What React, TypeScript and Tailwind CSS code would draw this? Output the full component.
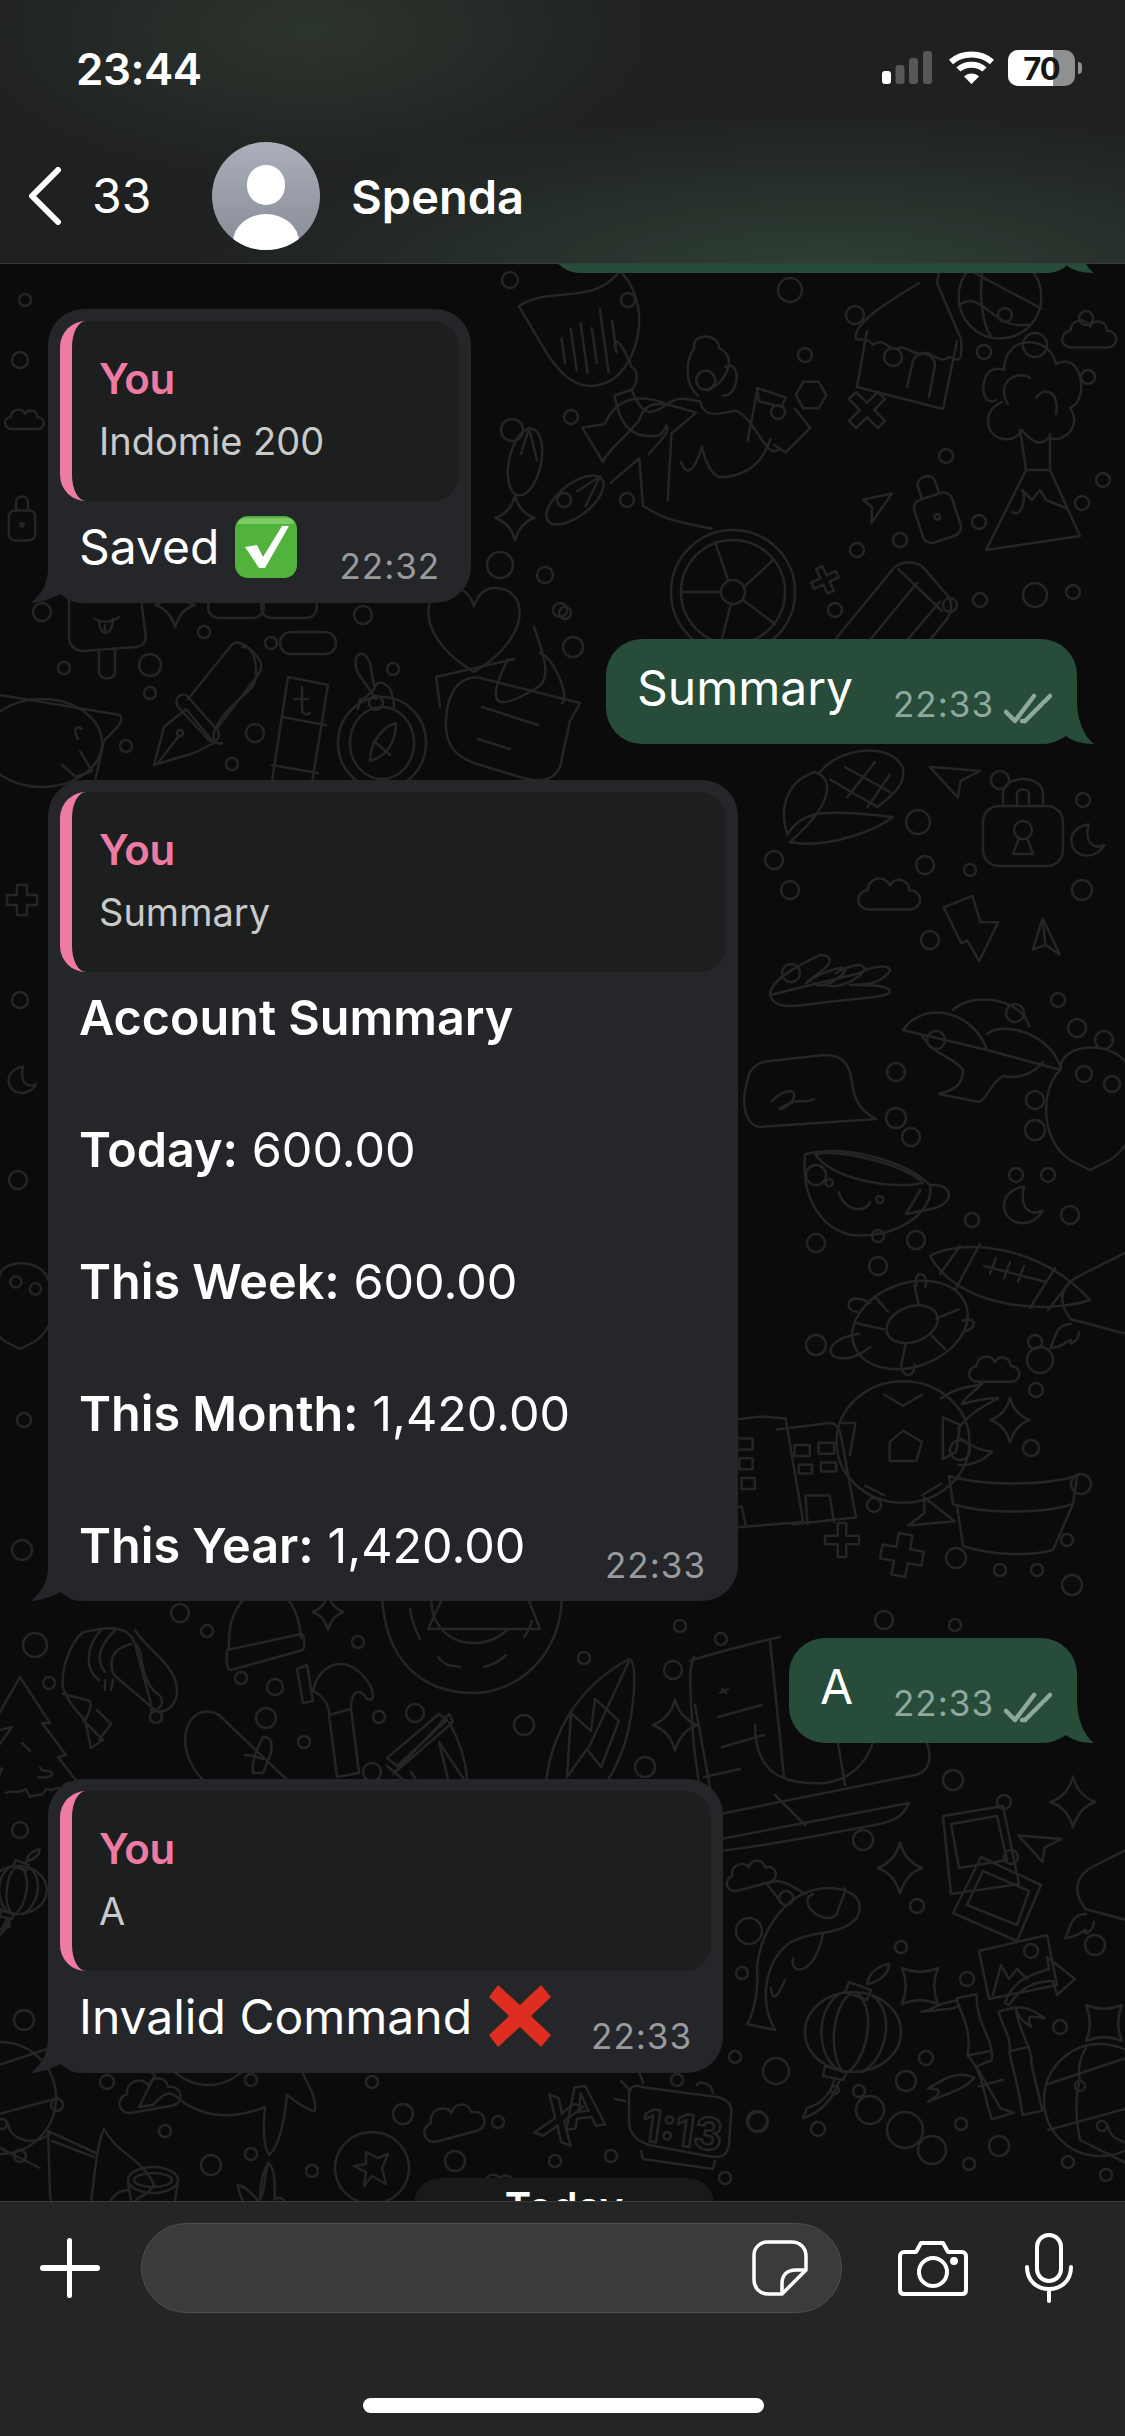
import type { ReactNode } from "react";

const shapes: Record<string, ReactNode> = {
  star: <path d="M0-32Q6-8 28 0 8 6 0 32-6 8-28 0-6-8 0-32Z" />,
  square: <path d="M-24-24Q0-14 24-24 14 0 24 24 0 14-24 24-14 0-24-24Z" />,
  plane: <path d="M-36-16 36-10 8 4 4 28Z M-36-16 8 4" />,
  plane2: <path d="M-36-16 36-10 8 4 4 28Z" />,
  cloud: <path d="M-26 18C-44 18-44-4-28-6-28-22-6-26 0-12 6-24 24-20 24-6 42-6 42 18 24 18Z" />,
  moon: <path d="M6-26C-34-22-30 26 4 26 16 26 28 18 32 8 16 16-2 6 6-26Z" />,
  heart: <path d="M0 30C-40 6-36-26-14-26-6-26-2-20 0-14 2-20 6-26 14-26 36-26 40 6 0 30Z" />,
  cross: <path d="M-10-30H10V-10H30V10H10V30H-10V10H-30V-10H-10Z" />,
  x: <path d="M-30-18-18-30 0-12 18-30 30-18 12 0 30 18 18 30 0 12-18 30-30 18-12 0Z" />,
  hex: <path d="M-28 0-14-24H14L28 0 14 24H-14Z" />,
  bolt: <path d="M-30-34 8-42 12-8 34-4 2 40-8 12-16 14Z" />,
  pill: <rect x="-28" y="-11" width="56" height="22" rx="11" />,
  lock: (
    <g>
      <rect x="-40" y="-24" width="80" height="60" rx="16" />
      <path d="M-20-24V-36C-20-56 20-56 20-36V-24M-20-24H-6V-36C-6-42 6-42 6-36V-24H20" />
      <circle cx="0" cy="0" r="9" />
      <path d="M-4 8-10 24H10L4 8" />
    </g>
  ),
  padlock: (
    <g>
      <rect x="-22" y="-16" width="44" height="50" rx="10" />
      <path d="M-10-16V-30C-10-42 10-42 10-30V-16" />
      <circle cx="0" cy="8" r="3" />
    </g>
  ),
  pot: (
    <g>
      <path d="M-64-34C-30-24 30-24 64-34L60-6C30 4-30 4-60-6Z" />
      <path d="M-56-4-50 36C-20 46 20 46 40 40L60-6" />
    </g>
  ),
  football: (
    <g>
      <path d="M-80-24C-50-42 30-36 80 20 40 34-50 30-80-24Z" />
      <path d="M-50-34-70-6M-30-36-55 10M45-12 20 28M60 2 38 30M-26-14 36 2M-14-22-20-6M0-18-6-2M14-14 8 2" />
    </g>
  ),
  soccer: (
    <g>
      <ellipse cx="0" cy="0" rx="70" ry="64" />
      <path d="M-20-50 0-38 20-50M-14 0 0-12 20 0 14 20-14 20Z M42-26 60-18 56 10 42 18ZM-64-20-50-20-56 14M-40 46-20 56M20 56 40 44" />
      <path d="M40-46C60-60 70-56 84-62 72-50 66-48 62-40 76-44 88-46 100-46 80-36 66-26 58-14M58 24C70 26 84 20 94 10 80 10 70 2 60-4" />
    </g>
  ),
  turtle: (
    <g>
      <ellipse cx="0" cy="0" rx="54" ry="38" transform="rotate(-20)" />
      <ellipse cx="2" cy="0" rx="24" ry="16" transform="rotate(-20)" />
      <path d="M-20-12-32-26M8-18 4-36M24-6 44-14M20 10 32 22M-4 18-8 36M-24 4-50-2" />
      <path d="M-46 8C-70 12-76 22-70 28-60 34-46 28-36 20M-48-12C-56-12-60-22-50-24-44-24-40-22-36-20M6-36C2-50 18-50 14-34M48-4C60-8 62 2 50 6M-8 38C-6 50 6 46 4 36" />
    </g>
  ),
  cup: (
    <g>
      <path d="M-54-30C-20-38 30-24 50-4 54 14 30 38-10 38-40 36-58 6-54-30Z" />
      <path d="M-46-30C-20-34 30-20 44-6 20 0-30-8-46-30Z" />
      <path d="M50-4C70-6 72 12 50 16L30 20 42 0" />
      <circle cx="-34" cy="-6" r="3" />
      <circle cx="8" cy="8" r="3" />
      <path d="M-26 2C-20 20-2 18 0 10" />
    </g>
  ),
  helmet: (
    <g>
      <path d="M-80-20C-60-50-10-40 4 0ZM4 0-80-20M4-16C20-30 70-16 78 20L4 0M-30-40C-10-60 40-50 46-24" />
      <path d="M-62-16C-50 6-30 6-20 20-20 36-30 40-44 44L-4 52C6 48 6 34 20 26 40 30 54 20 60 12" />
    </g>
  ),
  corn: (
    <g>
      <path d="M-42 14C-50-10-40-30-20-36-4-30-6-10-40 20-10 26 30 10 42 0-10-6-30-6-42 14Z" />
      <path d="M-16-36C0-56 40-60 50-40 54-26 40-16 30-8M-8-30 30-8M4-40 40-20M6-16 28-44M22-8 40-34" />
    </g>
  ),
  house: (
    <g>
      <path d="M-50-6-60 50 26 72 40 4" />
      <path d="M-60-6C-66 10-52-4-44 8-34 0-30 12-20 12-12 6-4 20 6 16 14 14 24 28 32 20 40 22 46 30 44 2L20-54 24-76C12-66 8-70 10-84M-60-6C-50-24-20-40 2-54" />
      <circle cx="-24" cy="20" r="9" />
      <path d="M-10 50-4 24C0 12 18 16 18 28L12 60" />
    </g>
  ),
  tree: (
    <g>
      <path d="M-34-30C-52-20-52-70-26-60-26-96 20-96 26-66 52-80 60-30 40-22 52-6 36 14 18 8 10 18 0 10-8 0-16 16-42 10-42-8-42-20-36-24-28-28" />
      <path d="M-22-26C-36-50-10-60 0-52M-10 0-4 40H20L20 4M-4 40-44 120 50 106 20 40M-18 82C-6 90-4 60-8 60L2 70 10 60 16 70 36 78" />
      <path d="M6-32C16-46 30-36 26-16" />
    </g>
  ),
  wheel: (
    <g>
      <ellipse cx="0" cy="0" rx="62" ry="62" />
      <ellipse cx="0" cy="0" rx="52" ry="52" />
      <circle cx="0" cy="0" r="12" />
      <path d="M-5-12-18-50M12-6 40-32M10 8 42 32M-2 12-12 50M-12 0H-50" />
    </g>
  ),
  rider: (
    <g>
      <path d="M-100-80C-88-110-60-112-32-100-54-104-60-96-64-84-80-64-98-52-102-40L-124-76-100-80M-32-100-4-92-30-70-34 0M-94-18-64-44-60 6C-40 20-20 24 12 30" />
      <path d="M-90-162C-90-170-84-170-72-140-64-136-66-122-72-116L-90-110C-84-76-70-64-44-68-36-70-36-86-34-74-36-66-50-54-54-48M-72-116C-60-86-50-90-36-100-20-112-10-104 0-104 4-84 22-92 38-94 60-84 70-40 84-54" />
      <circle cx="6" cy="-126" r="10" />
      <path d="M-2-110C-18-122-14-150-6-160-10-176 20-176 20-160 40-150 28-126 10-116M26-140C44-150 42-108 24-110" />
      <path d="M60-118 90-108 86-98 62-104ZM60-114 50-62M100-96 116-76 90-50 78-58M74-64C64-32 40-24 20-24 8-30 4-48 2-56-6-30-14-24-20-40" />
    </g>
  ),
  mic: (
    <g>
      <path d="M-60-60C-30-76 10-50 40-80 70-40 40 20 10 24-30 32-40-16-60-60Z" />
      <path d="M-24-24V0M-14-32V8M-4-36V12M6-30V4M16-46V14M26-34V-4" />
    </g>
  ),
  pencil: (
    <g>
      <path d="M-60 70-64 24 10-66C20-74 36-72 42-64L66-36C72-28 70-18 64-10L-8 78Z" />
      <path d="M-40 40 34-50M-12 52 58-30M14-64 60-20M-60 30C-50 30-52 44-42 42-30 40-32 56-22 60" />
    </g>
  ),
  speech: (
    <g>
      <path d="M-52-26C-52-36-40-44-30-44L24-50C40-50 50-44 52-22 54-6 60 6 76 14L-40 22C-50 22-62 6-52-26Z" />
      <path d="M-28-4C-14-18 0-16-8-4-16 6-28 6-14 0 0-8 2 0 14-6" />
    </g>
  ),
  hand: (
    <path d="M-70 10C-70-6-40-20-20-30-10-30-6-24-16-16L-34-2M-34-2C-20-12 10-24 4-12-6-2-20 4-26-2M-4-12C10-20 26-24 24-14 14-2-6 4-14 0M20-12C30-18 50-22 50-14 40-2 30 0 10 0 30 0 48 0 50 6 50 12 30 12-20 18-50 22-66 24-70 10Z" />
  ),
  fish: (
    <g>
      <path d="M-70 66-42 72C-60 40-50 0-26-16 0-30 20-20 40-40 50-62 30-70 10-70-30-68-56-30-60 10-58 40-66 60-70 66Z" />
      <path d="M-12-64C-30-76-40-80-50-74L-36-56M-4-64C-22-56 8-30 20-44 22-54 30-66 28-70M-24 0C-26 10-20 14-12 10 0 2 4-14 6-24M-46 30C-44 50-36 30-32 22" />
    </g>
  ),
  lantern: (
    <g>
      <ellipse cx="0" cy="0" rx="48" ry="40" />
      <path d="M0-40C-20-30-26 20-10 40M4-40C24-20 14 24-4 40M-14-38C-40-20-36 30-10 40M20-36C44-18 32 30 8 40" />
      <path d="M-4-50 18-42 14-32-8-40ZM14-48C16-60 26-66 36-68 36-58 26-50 14-48M-28 34-6 40-10 48-30 44ZM-18 46C-22 60-30 72-46 76L-50 86C-30 80-20 66-14 50" />
      <circle cx="-18" cy="58" r="4" />
    </g>
  ),
  photo: (
    <g>
      <path d="M-34-36 26-46 42 32-26 42Z" />
      <path d="M-26-28 20-36 30 8-18 16Z" />
    </g>
  ),
  photo2: (
    <g>
      <path d="M-16-48 44-20 20 36-44 8Z" />
      <path d="M-14-34 32-14 20 20-30 0Z" />
    </g>
  ),
  picture: (
    <g>
      <path d="M-34-14 34-30 44 20-24 34Z" />
      <circle cx="18" cy="-14" r="7" />
      <path d="M-20 30-12 0-4 14 4 4 14 14" />
      <path d="M-8 38C0 14 18 10 36 4L34-8 62 14 44 30 40 16C20 16 6 24-4 40Z" />
    </g>
  ),
  bamboo: (
    <g>
      <path d="M-24-56-6-60C-6-30 10-20 8 0L-6 6 16 44 28 48 8 54C0 30 0 10-14-4-10-30-20-40-24-56ZM-14-4 6-8M-4 24 18 18M-24-54C-40-52-50-44-56-44-36-46-24-46-22-50M-8 16C-24 8-40 20-50 26-40 26-34 28-50 38-30 30-16 26-8 16" />
      <path d="M14-44 30-48C30-30 46-10 44 4L54 46 36 50C32 20 26 6 24-8 26-20 18-30 14-44ZM24-8 42-12M30-48C44-48 50-42 56-38 44-40 38-42 44-30 34-36 30-42 30-48" />
    </g>
  ),
  globe: (
    <g>
      <circle cx="0" cy="0" r="56" />
      <path d="M-52-16 50-50M-52 30 58 0M-20 40 40 70M-20-20C-26 0-24 20-20 40M8 26C10 40 30 50 50 36M-14-52C-22-40-22-26-20-20" />
      <circle cx="-20" cy="-14" r="5" />
      <circle cx="2" cy="26" r="5" />
    </g>
  ),
  laptop: (
    <g>
      <path d="M-120-80-100 30 100-10C110-12 116-20 114-34L100-90M-126 60C-110 70-100 70 60 40 90 34 90 24 94 18L-126 60ZM-40 10-10 40" />
      <path d="M-60-60C-60-10-30 0 10-2 40-6 60-30 60-60M20-60 30 0" />
    </g>
  ),
  building: (
    <g>
      <path d="M-60-52-26-56-4-54 12 40-62 46ZM-12-44 36-50C42-50 44-46 46-40L60 36 2 42" />
      <path d="M-48-36H-34V-26H-48ZM-46-18H-34V-8H-46ZM-44 0H-32V10H-44ZM4-30H18V-20H4ZM26-32H40V-22H26ZM8-12H20V-4H8ZM28-14H42V-6H28ZM16 42 14 16H36L40 40M-58 28-44 26-40 44" />
    </g>
  ),
  paw: (
    <g>
      <path d="M-20 60C-50 40-50-10-30-30-30-60 30-60 40-30 60-10 50 40 20 60L0 70Z" />
      <circle cx="-6" cy="-26" r="8" />
      <circle cx="22" cy="-16" r="8" />
    </g>
  ),
  basket: (
    <g>
      <circle cx="0" cy="0" r="36" />
      <path d="M-28-24 36 10M-34 6C-16-6-4 30 24 24M-14-32C-20 0-14 26-8 34" />
    </g>
  ),
  sandal: (
    <g>
      <ellipse cx="0" cy="0" rx="16" ry="34" transform="rotate(12)" />
      <path d="M4-34-4-8M4-34 12-2" />
    </g>
  ),
  rocket: (
    <g>
      <path d="M-30 24C-50 0-40-20-20-30L60-70 70 50 30 40Z" />
      <path d="M-30 30C-50 30-50 50-56 60-40 60-34 50-30 50-34 60-20 50-20 40" />
    </g>
  ),
  popsicle: (
    <g>
      <path d="M-38-30V10C-38 18-32 24-24 24L30 20C38 18 40 12 38 4L34-30" />
      <path d="M-8 24V44C-8 54 8 54 8 44V22M-12-8C-4-4 4-4 12-10M-8-6C-8 10 6 10 6-8M-2-2V4" />
    </g>
  ),
  nib: (
    <g>
      <path d="M-48 62-38 24-16 6 12 40-8 50ZM-44 60-24 34" />
      <circle cx="-22" cy="30" r="3" />
      <path d="M-24 4C-30-6-18-12-14-6L16 28C20 38 8 42 4 34ZM-14-4 28-56C34-64 40-60 48-54 60-44 62-36 56-28L16 24" />
      <path d="M40-56C52-58 54-40 54-30 56-10 30-6 14 24 8 36 14 42 20 40" />
    </g>
  ),
  ruler: (
    <g>
      <path d="M-8-50 32-42 12 80-28 80ZM-14-10 30-2M-24 38 22 46" />
      <path d="M6-40V-18C6-12 12-12 14-14M-2-28H12" />
    </g>
  ),
  compass: (
    <g>
      <ellipse cx="0" cy="10" rx="44" ry="46" />
      <ellipse cx="0" cy="10" rx="32" ry="36" />
      <path d="M14-10C0-6-12 10-12 28 4 24 14 10 14-10ZM-8 8 8 22" />
      <path d="M-24-24C-24-36-10-36-6-48-2-54 8-48 10-38 12-32 12-30 12-26M-24-24-22-34" />
      <circle cx="-6" cy="-30" r="7" />
      <path d="M-6-34-24-60C-32-80-18-86-12-70L-8-48" />
    </g>
  ),
  jar: (
    <g>
      <path d="M-68 2C-66-30-50-44-30-38L66-14 56 4 46 50C40 64 24 66 6 60L-40 46C-56 40-70 30-68 2Z" />
      <path d="M-32-10 24 8M-36 22-4 32" />
      <path d="M-74-10-78-40 0-58M-6-58C-30-10-18-4 24-30 40-40 26-72 20-90M26-64C40-60 56-20 48-14" />
    </g>
  ),
  smile: (
    <g>
      <ellipse cx="-18" cy="10" rx="60" ry="44" />
      <path d="M22-4C14-10 14 0 18 6M20 18 32 38 16 44 2 32" />
      <path d="M-60-38 60-18C66-10 50 0 44 8L30 70" />
    </g>
  ),
  shrimp: (
    <g>
      <path d="M48 12C30-8 38-30 28-36 20-60-8-50-24-48-40-34-46-6-44 8-40 20-32 30-22 40L-16 68-4 60 -24 40M-22 40C-16 30-14 20-20 20L-44 14M-6-50C-24-30-20-8-8 0M8-50C-8-34-12-20-2-8M24-36C-2-30 4-8 8-4L48 30" />
      <path d="M28-36 44 24M48 12C62 20 52 32 44 30 60 36 70 24 70 10 70-14 40-30 28-50" />
      <path d="M-8 60 4 44-10 30M-2 0-2 10M6 0 4 10" />
    </g>
  ),
  beanie: (
    <g>
      <path d="M-36-2C-38-36-24-60 0-62 24-62 34-40 36-14" />
      <path d="M-38-2 36-18C40-18 40-6 38-2L-34 18C-40 18-38 2-38-2Z" />
      <path d="M-8-62C-8-52 8-52 6-62" />
    </g>
  ),
  hammer: (
    <path d="M-40-38-30-42-24-6-34-4ZM-24-16C-18-46 14-56 34-20 38-10 36-6 30-8 22-20 14-16 14 2L22 66 0 70-8 8C-8-6-16-12-24-16ZM-8 8 14 2" />
  ),
  record: (
    <g>
      <path d="M-92-50C-90 20-50 50 0 50 40 50 88 16 88-50" />
      <path d="M-42-50C-46-20-26 0 0 0 20 0 30-10 34-14" />
      <path d="M-64-34C-62-20-58-12-54-4M-36 14C-28 24-24 22-14 24M10 24C18 22 26 18 32 12M58-22C56-16 54-10 50-6" />
      <path d="M-10-90-46-14H66L36-90" />
    </g>
  ),
  surf: (
    <g>
      <path d="M-52 70C-50 10-20-40 32-68 40-66 38-30 32 0 26 30 14 50-6 80M32-66-8 20" />
      <path d="M-26-14-6 4-2-28 22-6 4 40-10 22-30 50Z" />
    </g>
  ),
  drum: (
    <path d="M-52 8 0-36 8-30-42 16ZM-52 16-14 48M10-36 14-28-46 24ZM10-28C26 0 30 26 28 50M-28 22-10 50M0-8 14 50M0-8 28 34" />
  ),
  skate: (
    <g>
      <path d="M-58 0C-66-30-46-50-26-38L60 44H-10C-40 34-52 20-58 0Z" />
      <path d="M8 20C6 6 14-8 18-16 30-16 26-4 26 0L18 20ZM0 2C6 2 12 4 18 6" />
    </g>
  ),
  pine: (
    <g>
      <path d="M-16-56-48 0-24-6-50 30-34 36-50 70M-16-56 14-10H6L30 22 22 24 42 50C36 52 30 46 26 56 20 52 18 60 10 56 6 66 0 60-6 64L-10 56C-18 62-24 56-30 60" />
      <path d="M-14 10-6 18M4 34C6 42 16 34 16 42 12 46 4 44 2 44" />
    </g>
  ),
  phone: (
    <g>
      <path d="M-46-60C-50-50-52-46-46 30L-38 90M-50-56C-40-60 20-76 40-80M30-76 44 60" />
      <path d="M-18-28-14-24M-20-24-12-28M-22 0 22-12M-18 30 24 18" />
      <path d="M-36 60 0 52" />
    </g>
  ),
  whale: (
    <g>
      <path d="M-114-38-100-30-116 2-102 0C-90-14-84-14-76-6-50 14-20 14 10 2 8 20 8 40 14 50 26 40 30 10 32-10 40-4 52 6 60 6 62-10 50-24 46-36 58-50 60-60 62-70" />
      <path d="M-80-66C-84-46-92-44-84-36-60-14-30-14-6-40 2-50 8-60 12-70" />
    </g>
  ),
  coin: (
    <g>
      <ellipse cx="0" cy="0" rx="37" ry="36" />
      <path d="M-6-16 6-10 16-14 10 0 14 16 0 8-8 18-6 4-18-2-6-4Z" />
    </g>
  ),
  sail: (
    <path d="M-54-24-52 40C-50 50-50 60-50 70M-54-24-6-2M-50-14-8 2M-12 54C-8 30-6-10 2-26 10-12 16-8 28 2 40 10 50 24 52 30 48 40 30 44 30 50" />
  ),
  mug: (
    <g>
      <ellipse cx="0" cy="-8" rx="25" ry="13" />
      <ellipse cx="0" cy="-8" rx="19" ry="7" />
      <path d="M-25-6-20 24H20L25-6M-24 2C-38 2-46 14-44 24" />
    </g>
  ),
  rabbit: (
    <g>
      <path d="M-34-6C-30 20-14 30-14 30M-34-6C-24-6-14 8-8 14 0 8 0-26 4-34 14-26 12 0 12 12 20 6 26 12 34 30" />
      <path d="M-6 10C-6-10-2-24 4-34" />
    </g>
  ),
  clock: (
    <g>
      <path d="M-52-30C-50-38-44-38-40-36L36-26C46-24 52-18 50-8L48 22C46 34 38 34 32 34L-32 22C-44 18-52 10-52-2Z" />
      <path d="M-40 28-38 36 32 46 34 38M-66-24-56-22M-60-42-52-34M-42-52-38-40M16-38C16-42 30-42 32-30" />
    </g>
  ),
};

const placed: [string, number, number, number, number?][] = [
  ["mic", 590, 360, 1.05, -8],
  ["star", 515, 518, 0.7],
  ["sandal", 525, 462, 1],
  ["sandal", 575, 500, 1, 40],
  ["plane2", 876, 505, 0.5, 120],
  ["hex", 811, 395, 0.55],
  ["x", 867, 410, 0.6],
  ["padlock", 935, 510, 0.9, -18],
  ["house", 917, 337, 1],
  ["tree", 1030, 430, 1],
  ["basket", 1000, 297, 1.15],
  ["cloud", 1090, 335, 0.7],
  ["wheel", 733, 592, 1],
  ["rider", 700, 500, 0.95],
  ["pencil", 885, 630, 0.95],
  ["x", 825, 580, 0.4, 20],
  ["corn", 840, 817, 1.25],
  ["lock", 1023, 830, 1],
  ["plane2", 955, 778, 0.7],
  ["cloud", 890, 895, 0.8],
  ["bolt", 972, 930, 0.8, -10],
  ["plane", 1045, 940, 0.55, 60],
  ["hand", 840, 985, 1],
  ["helmet", 983, 1050, 1],
  ["speech", 800, 1105, 1],
  ["cup", 870, 1190, 1.2],
  ["moon", 1020, 1205, 0.7],
  ["football", 1010, 1280, 1],
  ["turtle", 910, 1325, 1.1],
  ["cloud", 995, 1370, 0.65],
  ["soccer", 903, 1442, 0.95],
  ["star", 1010, 1420, 0.7],
  ["pot", 1013, 1510, 1],
  ["building", 790, 1478, 1.1],
  ["plane2", 930, 1515, 0.65, 170],
  ["cross", 902, 1555, 0.7, 10],
  ["x", 842, 1540, 0.5, 45],
  ["moon", 1085, 840, 0.6],
  ["paw", 1090, 1100, 1],
  ["rocket", 1095, 1300, 0.8],
  ["laptop", 815, 1785, 1],
  ["star", 1073, 1802, 0.8],
  ["photo", 977, 1852, 1],
  ["photo2", 997, 1905, 1],
  ["picture", 1013, 1965, 1],
  ["plane2", 1040, 1845, 0.6],
  ["star", 900, 1868, 0.8],
  ["cloud", 751, 1875, 0.65, -15],
  ["fish", 817, 1958, 1],
  ["lantern", 853, 2032, 1],
  ["square", 920, 1986, 0.75],
  ["square", 1104, 2023, 0.75],
  ["bamboo", 983, 2060, 1.1],
  ["globe", 1100, 2100, 1],
  ["rocket", 1110, 1890, 0.8],
  ["moon", 20, 1080, 0.5],
  ["cross", 22, 900, 0.5],
  ["paw", 20, 1300, 0.7],
  ["lantern", 18, 1890, 0.6],
  ["cloud", 25, 420, 0.5],
  ["padlock", 22, 520, 0.6],
  // strip under the first bubble
  ["popsicle", 107, 627, 1],
  ["pill", 236, 607, 1],
  ["pill", 289, 607, 1],
  ["pill", 308, 643, 1],
  ["star", 175, 605, 0.7],
  ["nib", 202, 703, 1],
  ["ruler", 296, 727, 1],
  ["compass", 382, 733, 1],
  ["heart", 474, 627, 1.5],
  ["jar", 514, 717, 1],
  ["smile", 60, 733, 1],
  // strip under the second bubble
  ["shrimp", 107, 1680, 1],
  ["beanie", 265, 1652, 1],
  ["star", 328, 1612, 0.55],
  ["hammer", 337, 1707, 1],
  ["record", 474, 1643, 1],
  ["surf", 597, 1727, 1],
  ["drum", 439, 1750, 1],
  ["skate", 245, 1753, 1],
  ["pine", 36, 1733, 1],
  ["phone", 740, 1717, 1],
  ["star", 675, 1725, 0.8],
  // strip above the composer
  ["cloud", 150, 2095, 0.8, -10],
  ["cloud", 454, 2122, 0.8, -15],
  ["whale", 255, 2105, 1],
  ["coin", 372, 2168, 1],
  ["sail", 102, 2155, 1],
  ["mug", 153, 2188, 1],
  ["rabbit", 265, 2190, 0.8],
  ["globe", 0, 2098, 1],
  ["clock", 681, 2123, 1],
  ["cloud", 500, 2185, 0.5],
];

const dots: [number, number, number][] = [
  [790, 290, 12], [855, 315, 9], [805, 355, 7], [778, 412, 7], [628, 300, 7], [512, 430, 11],
  [571, 417, 7], [627, 500, 7], [564, 500, 7], [500, 565, 13], [545, 575, 8], [857, 550, 7],
  [1005, 315, 7], [1086, 318, 7], [1035, 345, 12], [984, 352, 7], [1088, 377, 7], [946, 456, 7],
  [1103, 480, 7], [1082, 503, 7], [979, 522, 7], [900, 540, 7], [835, 610, 7], [950, 605, 7],
  [1035, 595, 12], [1073, 592, 7], [980, 600, 7], [560, 610, 7], [1000, 780, 9], [918, 822, 12],
  [925, 865, 9], [970, 870, 6], [1083, 800, 7], [1082, 890, 10], [774, 860, 9], [790, 890, 9],
  [791, 973, 9], [930, 940, 9], [936, 1040, 9], [896, 1072, 9], [896, 1118, 10], [911, 1137, 9],
  [1035, 1100, 9], [1077, 1028, 9], [1058, 1000, 7], [1015, 1013, 9], [1104, 1040, 9],
  [1035, 1130, 10], [1016, 1175, 7], [1048, 1175, 7], [1070, 1215, 9], [972, 1220, 7], [916, 1240, 9],
  [816, 1175, 10], [816, 1243, 9], [816, 1345, 10], [878, 1266, 9], [878, 1236, 6],
  [1035, 1342, 7], [1040, 1360, 13], [1036, 1390, 7], [1031, 1448, 8], [960, 1450, 10],
  [874, 1505, 7], [1081, 1484, 10], [1067, 1540, 6], [1000, 1570, 6], [956, 1558, 10], [1037, 1570, 6],
  [955, 1625, 6], [1072, 1585, 10], [884, 1620, 9], [953, 1780, 10], [1004, 1802, 7], [863, 1840, 10],
  [1011, 1857, 7], [786, 1898, 7], [917, 1906, 7], [749, 1931, 13],
  [901, 1947, 6], [742, 1973, 6], [967, 1979, 7], [1095, 1945, 10], [1060, 2027, 7], [735, 2057, 6],
  [776, 2071, 13], [926, 2058, 7], [906, 2081, 10], [859, 2091, 6], [758, 2122, 10], [818, 2129, 7],
  [961, 2124, 6], [999, 2146, 10], [969, 2164, 6], [1068, 2162, 6], [1106, 2175, 6], [725, 2178, 6],
  [870, 2110, 14], [905, 2130, 18], [932, 2150, 14],
  [42, 612, 9], [64, 668, 6], [150, 665, 11], [150, 693, 6], [204, 632, 6], [271, 643, 6], [255, 733, 9],
  [232, 764, 6], [126, 746, 6], [363, 615, 9], [393, 669, 6], [565, 613, 6], [573, 647, 10],
  [35, 1645, 12], [49, 1683, 6], [156, 1717, 6], [207, 1631, 6], [180, 1613, 9], [358, 1642, 6],
  [241, 1678, 6], [275, 1687, 8], [266, 1718, 10], [304, 1742, 6], [379, 1717, 6], [415, 1713, 9],
  [372, 1772, 9], [584, 1658, 6], [524, 1725, 10], [645, 1767, 10], [673, 1670, 9], [680, 1626, 6],
  [721, 1639, 6], [107, 2082, 7], [57, 2105, 6], [165, 2131, 6], [20, 2156, 6], [211, 2165, 10],
  [251, 2154, 6], [251, 2080, 6], [372, 2082, 6], [403, 2114, 10], [498, 2122, 6], [455, 2161, 10],
  [555, 2161, 6], [611, 2156, 6], [677, 2080, 6], [757, 2121, 10], [312, 2171, 6],
  [20, 360, 8], [25, 300, 6], [510, 280, 8], [20, 1000, 8], [18, 1180, 9], [24, 1420, 7], [22, 1550, 10],
  [20, 1830, 8], [24, 2020, 10],
];

// whatsapp wallpaper, placed by eye against the reference
function Wallpaper() {
  return (
    <svg
      className="absolute inset-0 h-full w-full"
      viewBox="0 0 1125 2436"
      fill="none"
      stroke="#252525"
      strokeWidth="2.5"
      strokeLinejoin="round"
      strokeLinecap="round"
    >
      {placed.map(([name, x, y, s, r], i) => (
        <g
          key={i}
          transform={`translate(${x} ${y}) rotate(${r ?? 0}) scale(${s})`}
          strokeWidth={2.5 / s}
        >
          {shapes[name]}
        </g>
      ))}
      {dots.map(([x, y, r], i) => (
        <circle key={i} cx={x} cy={y} r={r} />
      ))}
      <g fontFamily="Inter, sans-serif" fontWeight="700">
        <text x="533" y="2132" fontSize="56" transform="rotate(20 533 2132)">X</text>
        <text x="565" y="2130" fontSize="56" transform="rotate(-8 565 2130)">A</text>
        <text x="640" y="2140" fontSize="44" transform="rotate(8 640 2140)">1:13</text>
      </g>
    </svg>
  );
}

function StatusIcons() {
  return (
    <div className="flex items-center">
      <svg width="50" height="34" viewBox="0 0 50 34" fill="#fff">
        <rect x="0" y="20" width="9" height="13" rx="3" />
        <rect x="13.5" y="14" width="9" height="19" rx="3" fill="#565757" />
        <rect x="27" y="7" width="9" height="26" rx="3" fill="#565757" />
        <rect x="41" y="0" width="9" height="33" rx="3" fill="#565757" />
      </svg>
      <svg className="ml-[16px]" width="47" height="34" viewBox="0 0 47 34" fill="none" stroke="#fff" strokeWidth="6">
        <path d="M3 11C14 1 33 1 44 11" />
        <path d="M10.5 18.5C17 12 30 12 36.5 18.5" />
        <path d="M23.5 33 16 25.5C20 21.5 27 21.5 31 25.5Z" fill="#fff" stroke="none" />
      </svg>
      <div className="relative ml-[13px] flex h-[36px] w-[67px] overflow-hidden rounded-[10px] bg-[#8f9090]">
        <div className="h-full w-[45px] bg-white" />
        <span className="absolute inset-0 flex items-center justify-center text-[31px] leading-none font-bold tracking-[-1px] text-[#151616]">
          70
        </span>
      </div>
      <div className="ml-[3px] h-[12px] w-[4px] rounded-r-full bg-[#8f9090]" />
    </div>
  );
}

function Header() {
  return (
    <header className="relative z-10 flex h-[264px] shrink-0 flex-col border-b border-[#3a3c3c] bg-[#1f2120] bg-[radial-gradient(ellipse_360px_160px_at_310px_30px,#2c352d,transparent),radial-gradient(ellipse_640px_160px_at_830px_270px,#2e3f35,transparent)]">
      <div className="flex h-[142px] items-start justify-between pt-[43px] pr-[43px] pl-[76px]">
        <span className="text-[44px] leading-[52px] font-semibold tracking-[-0.5px] text-white">23:44</span>
        <div className="pt-[7px]">
          <StatusIcons />
        </div>
      </div>
      <div className="flex items-center pl-[28px]">
        <svg width="34" height="58" viewBox="0 0 34 58" fill="none" stroke="#fff" strokeWidth="6" strokeLinecap="round" strokeLinejoin="round">
          <path d="M30 3 4 29 30 55" />
        </svg>
        <span className="ml-[30px] text-[48px] leading-none text-white">33</span>
        <div className="relative ml-[61px] h-[108px] w-[108px] overflow-hidden rounded-full bg-gradient-to-b from-[#abafba] to-[#888c96]">
          <div className="absolute top-[23px] left-[35px] h-[40px] w-[38px] rounded-full bg-white" />
          <div className="absolute top-[72px] left-[21px] h-[56px] w-[66px] rounded-[50%] bg-white" />
        </div>
        <span className="ml-[31px] text-[47px] leading-none font-semibold text-white">Spenda</span>
      </div>
    </header>
  );
}

function IncomingTail() {
  return (
    <svg className="absolute bottom-0 left-[-17px]" width="50" height="40" viewBox="0 0 50 40" fill="#242629">
      <path d="M17 0C18 18 12 30 0 40 14 39 22 34 30 31 36 36 42 40 50 40V0Z" />
    </svg>
  );
}

function OutgoingTail() {
  return (
    <svg className="absolute right-[-17px] bottom-0" width="50" height="40" viewBox="0 0 50 40" fill="#274d3a">
      <path d="M33 0C34 18 40 32 50 40 38 40 28 37 22 32 16 36 8 40 0 40V0Z" />
    </svg>
  );
}

function Time({ value, className }: { value: string; className: string }) {
  return <span className={`text-[35px] leading-none tracking-[1px] ${className}`}>{value}</span>;
}

function DoubleCheck() {
  return (
    <svg width="48" height="32" viewBox="0 0 48 32" fill="none" stroke="#90a89c" strokeWidth="4.5" strokeLinecap="round" strokeLinejoin="round">
      <path d="M2 19 11 28 30 3" />
      <path d="M21 28 46 3" />
      <path d="M18 28 21 28" />
    </svg>
  );
}

function Quote({ sender, text }: { sender: string; text: string }) {
  return (
    <div className="h-[180px] rounded-[26px] border-l-[12px] border-[#ee7ba4] bg-[#1d1f1f] pt-[28px] pl-[27px]">
      <div className="text-[42px] leading-[60px] font-semibold tracking-[-0.5px] text-[#ee7ba4]">{sender}</div>
      <div className="text-[38px] leading-[64px] text-[#c9caca]">{text}</div>
    </div>
  );
}

function Incoming({ width, children }: { width: string; children: ReactNode }) {
  return (
    <div className={`relative shrink-0 rounded-[36px] bg-[#242629] p-[12px] pb-0 ${width}`}>
      <IncomingTail />
      {children}
    </div>
  );
}

function Outgoing({ width, text, textWidth }: { width: string; text: string; textWidth: string }) {
  return (
    <div className={`relative mr-[48px] flex h-[105px] shrink-0 self-end rounded-[36px] bg-[#274d3a] pl-[31px] ${width}`}>
      <OutgoingTail />
      <span className={`pt-[20px] text-[48px] leading-[58px] text-white ${textWidth}`}>{text}</span>
      <div className="flex h-[83px] items-end">
        <Time value="22:33" className="text-[#90a89c]" />
        <div className="mb-[-3px] ml-[10px]">
          <DoubleCheck />
        </div>
      </div>
    </div>
  );
}

function CheckEmoji() {
  return (
    <svg width="62" height="62" viewBox="0 0 62 62">
      <rect x="0" y="0" width="62" height="62" rx="13" fill="#52b33c" />
      <path d="M3 8C3 4 7 2 12 2H50C56 2 59 4 59 8Z" fill="#7ccb66" />
      <path d="M10 31 22 29 28 41 47 10 54 10 30 52 24 52Z" fill="#fff" />
    </svg>
  );
}

function CrossEmoji() {
  return (
    <svg width="62" height="62" viewBox="0 0 62 62" fill="#dd2e1f">
      <path d="M9 0 31 20 52 0 62 12 42 31 62 50 52 62 31 42 9 62 0 50 20 31 0 12Z" />
    </svg>
  );
}

function Row({ label, value, last }: { label: string; value: string; last?: boolean }) {
  return (
    <div className={`text-[48.5px] leading-[66px] text-white ${last ? "" : "mb-[66px]"}`}>
      <span className="font-semibold">{label}</span> {value}
    </div>
  );
}

function Messages() {
  return (
    <main className="relative flex flex-1 flex-col gap-[36px] overflow-hidden pl-[48px]">
      {/* tail end of the bubble scrolled under the header */}
      <div className="relative mt-[-60px] mr-[48px] ml-[502px] h-[69px] shrink-0 rounded-[30px] bg-[#274d3a]">
        <OutgoingTail />
      </div>

      <Incoming width="w-[423px]">
        <Quote sender="You" text="Indomie 200" />
        <div className="flex h-[102px] items-start pl-[19px]">
          <span className="pt-[17px] text-[48px] leading-[58px] text-white">Saved</span>
          <div className="mt-[15px] ml-[16px]">
            <CheckEmoji />
          </div>
          <div className="mt-[48px] ml-[42px]">
            <Time value="22:32" className="text-[#999a9b]" />
          </div>
        </div>
      </Incoming>

      <Outgoing width="w-[471px]" text="Summary" textWidth="w-[256px]" />

      <Incoming width="w-[690px]">
        <Quote sender="You" text="Summary" />
        <div className="relative h-[629px] pt-[13px] pl-[19px]">
          <Row label="Account Summary" value="" />
          <Row label="Today:" value="600.00" />
          <Row label="This Week:" value="600.00" />
          <Row label="This Month:" value="1,420.00" />
          <Row label="This Year:" value="1,420.00" last />
          <div className="absolute right-[20px] bottom-[17px]">
            <Time value="22:33" className="text-[#999a9b]" />
          </div>
        </div>
      </Incoming>

      <div className="mt-[1px] shrink-0 self-end">
        <Outgoing width="w-[288px]" text="A" textWidth="w-[73px]" />
      </div>

      <Incoming width="w-[675px]">
        <Quote sender="You" text="A" />
        <div className="flex h-[102px] items-start pl-[19px]">
          <span className="pt-[17px] text-[48px] leading-[58px] text-white">Invalid Command</span>
          <div className="mt-[14px] ml-[17px]">
            <CrossEmoji />
          </div>
          <div className="mt-[48px] ml-[40px]">
            <Time value="22:33" className="text-[#999a9b]" />
          </div>
        </div>
      </Incoming>

      <div className="mt-[69px] ml-[366px] h-[70px] w-[300px] shrink-0 rounded-t-[26px] bg-[#181a1a] pt-[7px] text-center text-[40px] leading-[44px] font-semibold text-white">
        Today
      </div>
    </main>
  );
}

function Composer() {
  return (
    <footer className="relative z-10 h-[235px] shrink-0 border-t border-[#3a3c3c] bg-[#242625]">
      <div className="flex items-center pt-[21px] pl-[40px]">
        <svg width="60" height="60" viewBox="0 0 60 60" fill="#fff">
          <rect x="0" y="27" width="60" height="6" rx="3" />
          <rect x="27" y="0" width="5" height="60" rx="2.5" />
        </svg>
        <div className="ml-[41px] flex h-[90px] w-[701px] items-center justify-end rounded-full border border-[#4d4f4f] bg-[#3a3c3b] pr-[33px]">
          <svg width="56" height="56" viewBox="0 0 56 56" fill="none" stroke="#fff" strokeWidth="3.5" strokeLinejoin="round">
            <path d="M15 2H40C48 2 54 8 54 16V30L30 54H16C8 54 2 48 2 40V15C2 8 8 2 15 2Z" />
            <path d="M54 30H44C34 30 30 36 30 44V54" />
          </svg>
        </div>
        <svg className="ml-[56px]" width="70" height="56" viewBox="0 0 70 56" fill="none" stroke="#fff" strokeWidth="4" strokeLinejoin="round">
          <path d="M6 12H18L23 3H45L50 12H64C66 12 68 14 68 16V50C68 53 66 54 64 54H6C4 54 2 53 2 50V16C2 14 4 12 6 12Z" />
          <circle cx="35" cy="32" r="14" />
          <circle cx="56" cy="21" r="2" fill="#fff" />
        </svg>
        <svg className="ml-[57px]" width="48" height="70" viewBox="0 0 48 70" fill="none" stroke="#fff" strokeWidth="4" strokeLinecap="round">
          <rect x="12" y="2" width="24" height="46" rx="12" />
          <path d="M2 34C2 48 12 56 24 56 36 56 46 48 46 34" />
          <path d="M24 56V68" />
        </svg>
      </div>
      <div className="absolute top-[196px] left-[363px] h-[15px] w-[401px] rounded-full bg-white" />
    </footer>
  );
}

export default function App() {
  return (
    <div
      className="relative flex h-[2436px] w-[1125px] flex-col overflow-hidden bg-[#0b0b0b]"
      style={{ fontFamily: 'Inter, "Liberation Sans", sans-serif' }}
    >
      <Wallpaper />
      <Header />
      <Messages />
      <Composer />
    </div>
  );
}
